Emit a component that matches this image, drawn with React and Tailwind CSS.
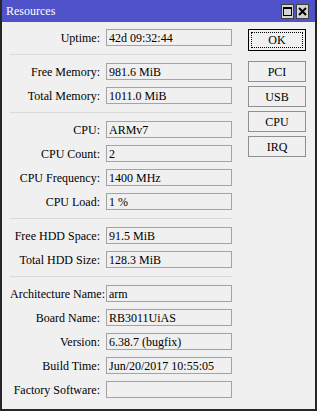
import React from 'react';

const groups = [
  [['Uptime', '42d 09:32:44']],
  [
    ['Free Memory', '981.6 MiB'],
    ['Total Memory', '1011.0 MiB'],
  ],
  [
    ['CPU', 'ARMv7'],
    ['CPU Count', '2'],
    ['CPU Frequency', '1400 MHz'],
    ['CPU Load', '1 %'],
  ],
  [
    ['Free HDD Space', '91.5 MiB'],
    ['Total HDD Size', '128.3 MiB'],
  ],
  [
    ['Architecture Name', 'arm'],
    ['Board Name', 'RB3011UiAS'],
    ['Version', '6.38.7 (bugfix)'],
    ['Build Time', 'Jun/20/2017 10:55:05'],
    ['Factory Software', ''],
  ],
];

const Field = ({ label, value }) => (
  <div className="flex items-center gap-[6px]">
    <div className="w-[90px] text-right whitespace-nowrap leading-none">{label}:</div>
    <div className="w-[126px] h-[17px] border border-[#a3a3a3] pl-[2px] flex items-center leading-none whitespace-nowrap">
      {value}
    </div>
  </div>
);

const TitleButton = ({ children }) => (
  <div className="w-[13px] h-[15px] bg-[#d4d4d4] border border-[#404040] flex items-center justify-center">
    {children}
  </div>
);

const SideButton = ({ label }) => (
  <button className="w-[58px] h-[21px] border border-[#8f8f8f] bg-[#f0f0f0] leading-none">{label}</button>
);

export default function App() {
  return (
    <div className="w-[317px] h-[411px] flex flex-col border-2 border-t-0 border-[#262626] bg-[#f0f0f0] text-[12px] text-black overflow-hidden font-['Liberation_Serif','Times_New_Roman',serif]">
      {/* title bar */}
      <div className="h-[22px] shrink-0 bg-[#4f52c8] flex items-center justify-between pl-[4px] pr-[6px]">
        <span className="text-white text-[12px] leading-none">Resources</span>
        <div className="flex gap-[2px]">
          <TitleButton>
            <svg width="9" height="9" viewBox="0 0 9 9">
              <rect x="0.5" y="0.5" width="8" height="8" fill="none" stroke="#000" />
              <rect x="0" y="0" width="9" height="2" fill="#000" />
            </svg>
          </TitleButton>
          <TitleButton>
            <svg width="9" height="9" viewBox="0 0 9 9">
              <path d="M1 1 L8 8 M8 1 L1 8" stroke="#000" strokeWidth="2" />
            </svg>
          </TitleButton>
        </div>
      </div>

      {/* body */}
      <div className="flex pt-[7px] pl-[8px] gap-[16px]">
        <div className="w-[222px] flex flex-col">
          {groups.map((rows, gi) => (
            <React.Fragment key={gi}>
              {gi > 0 && <div className="h-px bg-[#d9d9d9] my-[8px]" />}
              <div className="flex flex-col gap-[7px]">
                {rows.map(([l, v]) => (
                  <Field key={l} label={l} value={v} />
                ))}
              </div>
            </React.Fragment>
          ))}
        </div>

        <div className="flex flex-col">
          <button className="w-[58px] h-[22px] border border-black bg-[#f0f0f0] leading-none outline-1 outline-dotted outline-black outline-offset-[-4px]">
            OK
          </button>
          <div className="flex flex-col gap-[4px] mt-[10px]">
            <SideButton label="PCI" />
            <SideButton label="USB" />
            <SideButton label="CPU" />
            <SideButton label="IRQ" />
          </div>
        </div>
      </div>
    </div>
  );
}
